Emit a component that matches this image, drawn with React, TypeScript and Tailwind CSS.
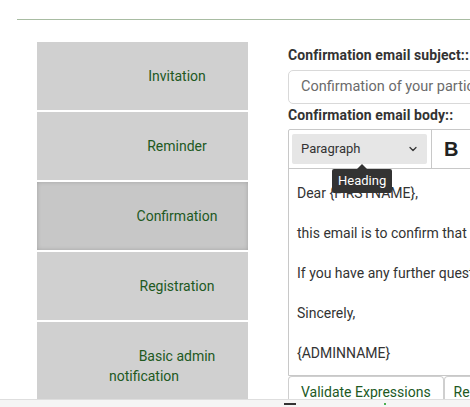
import React from 'react';
import { ChevronDown } from 'lucide-react';

const tabs = ['Invitation', 'Reminder', 'Confirmation', 'Registration'];

const bodyLines = [
  'Dear {FIRSTNAME},',
  'this email is to confirm that you have completed the survey titled {SURVEYNAME}',
  'If you have any further questions about this email, please contact {ADMINNAME}',
  'Sincerely,',
  '{ADMINNAME}',
];

function Tab({ active, tall, children }: { active?: boolean; tall?: boolean; children: React.ReactNode }) {
  return (
    <div
      className={
        'flex items-center justify-center pl-[70px] pr-[1px] text-center text-[14px] leading-[20px] text-[#21591f] ' +
        (tall ? 'h-[88px] ' : 'h-[68px] ') +
        (active ? 'bg-[#c7c7c7] shadow-[inset_0_0_4px_rgba(0,0,0,0.18)]' : 'bg-[#d0d0d0]')
      }
    >
      {children}
    </div>
  );
}

export default function App() {
  return (
    <div
      className="relative w-[470px] h-[407px] overflow-hidden bg-white text-[#333]"
      style={{ fontFamily: 'Roboto, "Noto Sans", sans-serif' }}
    >
      {/* top rule */}
      <div className="pt-[19px] pl-[17px]">
        <div className="border-t border-[#a8bca2]" />
      </div>

      <div className="flex pl-[37px] pt-[22px] gap-[40px]">
        {/* template tabs */}
        <div className="w-[211px] shrink-0 flex flex-col gap-[2px]">
          {tabs.map((t) => (
            <Tab key={t} active={t === 'Confirmation'}>
              {t}
            </Tab>
          ))}
          <Tab tall>
            <span>
              Basic admin{' '}
              <span className="whitespace-nowrap">
                notification
                <span className="inline-block w-[66px]" />
              </span>
            </span>
          </Tab>
        </div>

        {/* editor column */}
        <div className="w-[420px] shrink-0 flex flex-col">
          <div className="pt-[4px] text-[14px] leading-[18px] font-bold text-[#333] tracking-[0.1px]">
            Confirmation email subject::
          </div>
          <div className="mt-[6px] h-[34px] border border-[#d9d9d9] rounded-[5px] flex items-center px-[12px] text-[14.5px] text-[#6b6b6b] whitespace-nowrap overflow-hidden">
            Confirmation of your participation in our survey
          </div>
          <div className="mt-[2px] text-[14px] leading-[18px] font-bold text-[#333] tracking-[0.1px]">
            Confirmation email body::
          </div>

          <div className="relative mt-[5px] border border-[#c8c8c8] rounded-t-[2px]">
            {/* toolbar */}
            <div className="h-[39px] flex items-stretch border-b border-[#c8c8c8]">
              <div className="flex items-center pl-[3px] pr-[4px] border-r border-[#c8c8c8]">
                <div className="w-[135px] h-[30px] bg-[#e6e6e6] rounded-[2px] flex items-center justify-between pl-[9px] pr-[8px] text-[13px] text-[#333]">
                  <span>Paragraph</span>
                  <ChevronDown className="w-[12px] h-[12px]" strokeWidth={2.5} />
                </div>
              </div>
              <div
                className="flex items-center px-[12px] text-[20px] font-bold text-[#222]"
                style={{ fontFamily: '"Liberation Sans", Arial, sans-serif' }}
              >
                B
              </div>
            </div>

            {/* tooltip */}
            <div className="absolute left-[43px] top-[34px] z-10 flex flex-col items-center">
              <div className="w-0 h-0 border-x-[5px] border-x-transparent border-b-[5px] border-b-[#333]" />
              <div className="bg-[#333] text-white text-[13px] leading-[24px] px-[6px] rounded-[2px]">
                Heading
              </div>
            </div>

            {/* body */}
            <div className="px-[8px] pt-[14px] pb-[12px] text-[14px] leading-[20px] text-[#333]">
              {bodyLines.map((l, i) => (
                <p key={i} className={'whitespace-nowrap ' + (i > 0 ? 'mt-[20px]' : '')}>
                  {l}
                </p>
              ))}
            </div>
          </div>

          <div className="flex">
            <div className="h-[30px] px-[12px] pt-[5px] border border-[#cfcfcf] border-b-0 rounded-t-[4px] text-[14px] text-[#21591f] whitespace-nowrap">
              Validate Expressions
            </div>
            <div className="h-[30px] px-[9px] pt-[5px] border border-[#cfcfcf] border-b-0 rounded-t-[4px] text-[14px] text-[#21591f] whitespace-nowrap">
              Reset
            </div>
          </div>
        </div>
      </div>

      {/* fixed footer bar */}
      <div className="absolute left-0 right-0 bottom-0 h-[8px] bg-[#f5f5f5] border-t border-[#dedede]">
        <div className="absolute left-[284px] top-[3px] w-[12px] h-[2px] bg-[#333]" />
        <div className="absolute left-[384px] top-[3px] w-[2px] h-[2px] bg-[#4caf50]" />
      </div>
    </div>
  );
}
